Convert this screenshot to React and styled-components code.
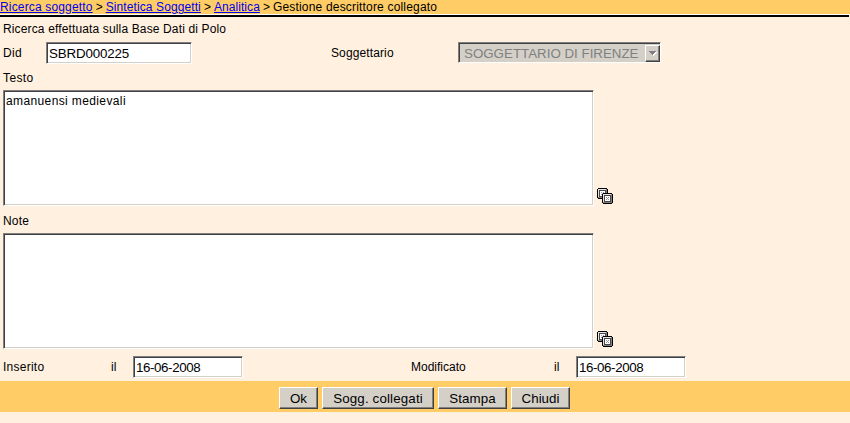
import React from "react";
import styled, { createGlobalStyle, css } from "styled-components";

const Global = createGlobalStyle`
  * { box-sizing: border-box; }
  body { margin: 0; background: #fff0e0; overflow: hidden; }
`;
const Page = styled.main`
  width: 850px;
  height: 423px;
  background: #fff0e0;
  color: #000;
  font: 12px/15px "Liberation Sans", Arial, sans-serif;
`;
const Breadcrumb = styled.nav`
  height: 14px;
  background: #ffcc66;
  line-height: 14px;
  white-space: pre;
`;
const Rule = styled.div`
  width: 849px;
  height: 3px;
  background: #000;
  border-top: 1px solid #fff;
`;
const Text = styled.span`
  letter-spacing: ${(p) => p.$ls || 0}px;
  white-space: pre;
`;
const Crumb = styled.a`
  color: #0000ee;
  text-decoration: underline;
  text-underline-offset: 1px;
  text-decoration-thickness: 1px;
  letter-spacing: ${(p) => p.$ls || 0}px;
`;
const Line = styled.div`
  display: flex;
  align-items: center;
  height: ${(p) => p.$h}px;
  padding-top: ${(p) => p.$pt || 0}px;
  padding-left: 3px;
`;
const Cell = styled.div`
  width: ${(p) => p.$w}px;
  flex: none;
  letter-spacing: ${(p) => p.$ls || 0}px;
`;
const sunken = css`
  border: 1px solid;
  border-color: #808080 #fff #fff #808080;
  border-radius: 0;
  box-shadow: inset 1px 1px #404040, inset -1px -1px #d4d0c8;
  outline: none;
  color: #000;
`;
const Input = styled.input`
  ${sunken}
  display: block;
  width: ${(p) => p.$w}px;
  height: 22px;
  margin: 0;
  padding: 2px 2px 1px;
  background: #fff;
  font: 13.33px "Liberation Sans", Arial, sans-serif;
  letter-spacing: ${(p) => p.$ls || 0}px;
`;
const AreaRow = styled.div`
  display: flex;
  align-items: flex-end;
  gap: 3px;
  height: 116px;
  padding-left: 3px;
`;
const Area = styled.textarea`
  ${sunken}
  display: block;
  width: 591px;
  height: 116px;
  margin: 0;
  padding: 3px 2px 2px;
  background: #fff;
  resize: none;
  font: 12px/15px "Liberation Sans", Arial, sans-serif;
  letter-spacing: 0.38px;
`;
const Select = styled.div`
  ${sunken}
  display: flex;
  align-items: center;
  align-self: flex-start;
  justify-content: space-between;
  width: 203px;
  height: 21px;
  padding: 1px 0 0 5px;
  background: #d4d0c8;
  color: #808080;
  font-size: 13.33px;
  letter-spacing: -0.04px;
`;
const Arrow = styled.span`
  display: flex;
  align-items: center;
  justify-content: center;
  width: 15px;
  height: 17px;
  border: 1px solid;
  border-color: #fff #404040 #404040 #fff;
  box-shadow: inset -1px -1px #808080;
`;
const Glyph = styled.svg`
  display: block;
  flex: none;
  margin-bottom: ${(p) => p.$mb || 0}px;
`;
const Footer = styled.footer`
  display: flex;
  gap: 4px;
  height: 31px;
  padding: 6px 0 0 279px;
  background: #ffcc66;
`;
const Button = styled.button`
  width: ${(p) => p.$w}px;
  height: 22px;
  margin: 0;
  padding: 1px 0 0;
  border: 1px solid;
  border-color: #fff #404040 #404040 #fff;
  border-radius: 0;
  box-shadow: inset -1px -1px #808080;
  background: #d4d0c8;
  color: #000;
  font: 13.33px "Liberation Sans", Arial, sans-serif;
  letter-spacing: ${(p) => p.$ls || 0}px;
`;

const Key = ({ x, y }) => (
  <g transform={`translate(${x} ${y})`}>
    <path d="M1 0h9v1h1v9h-1v1H1v-1H0V1h1z" fill="#000" />
    <path d="M1 1h9v9H1z" fill="#808080" />
    <path d="M1 1h8v1H2v7H1z" fill="#e4e4e4" />
    <path d="M2 2h7v7H2z" fill="#484848" />
    <path d="M3 3h5v5H3z" fill="#fff" />
    <path d="M4 4h1v1H4zM6 4h1v1H6zM5 5h1v1H5zM4 6h1v1H4zM6 6h1v1H6z" fill="#999" />
  </g>
);
const KeysIcon = () => (
  <Glyph width="16" height="16" $mb={2} shapeRendering="crispEdges">
    <Key x={0} y={0} />
    <Key x={5} y={5} />
  </Glyph>
);

export default function App() {
  return (
    <>
      <Global />
      <Page>
        <Breadcrumb>
          <Crumb $ls={0.16}>Ricerca soggetto</Crumb>
          <Text $ls={-0.2}> &gt; </Text>
          <Crumb $ls={0.1}>Sintetica Soggetti</Crumb>
          <Text $ls={-0.2}> &gt; </Text>
          <Crumb $ls={0.06}>Analitica</Crumb>
          <Text $ls={-0.2}> &gt; </Text>
          <Text $ls={0.18}>Gestione descrittore collegato</Text>
        </Breadcrumb>
        <Rule />
        <Line $h={25}><Text $ls={0.14}>Ricerca effettuata sulla Base Dati di Polo</Text></Line>
        <Line $h={22}>
          <Cell $w={43} $ls={0.3}>Did</Cell>
          <Cell $w={285}><Input $w={146} $ls={-0.15} defaultValue="SBRD000225" /></Cell>
          <Cell $w={127} $ls={0.12}>Soggettario</Cell>
          <Select>
            <Text>SOGGETTARIO DI FIRENZE</Text>
            <Arrow>
              <Glyph width="9" height="6" shapeRendering="crispEdges">
                <path d="M1 1h7v1H7v1H6v1H5v1H4V4H3V3H2V2H1z" transform="translate(1 1)" fill="#fff" />
                <path d="M0 0h7v1H6v1H5v1H4v1H3V3H2V2H1V1H0z" transform="translate(1 1)" fill="#808080" />
              </Glyph>
            </Arrow>
          </Select>
        </Line>
        <Line $h={26} $pt={2}><Text $ls={0.4}>Testo</Text></Line>
        <AreaRow><Area defaultValue="amanuensi medievali" spellCheck={false} /><KeysIcon /></AreaRow>
        <Line $h={27} $pt={3}><Text $ls={0.2}>Note</Text></Line>
        <AreaRow><Area spellCheck={false} /><KeysIcon /></AreaRow>
        <Line $h={32} $pt={4}>
          <Cell $w={108} $ls={0.25}>Inserito</Cell>
          <Cell $w={22}>il</Cell>
          <Cell $w={278}><Input $w={110} $ls={-0.4} defaultValue="16-06-2008" /></Cell>
          <Cell $w={143}>Modificato</Cell>
          <Cell $w={22}>il</Cell>
          <Input $w={110} $ls={-0.4} defaultValue="16-06-2008" />
        </Line>
        <Footer>
          <Button $w={39}>Ok</Button>
          <Button $w={112} $ls={0.15}>Sogg. collegati</Button>
          <Button $w={69} $ls={0.1}>Stampa</Button>
          <Button $w={59}>Chiudi</Button>
        </Footer>
      </Page>
    </>
  );
}
